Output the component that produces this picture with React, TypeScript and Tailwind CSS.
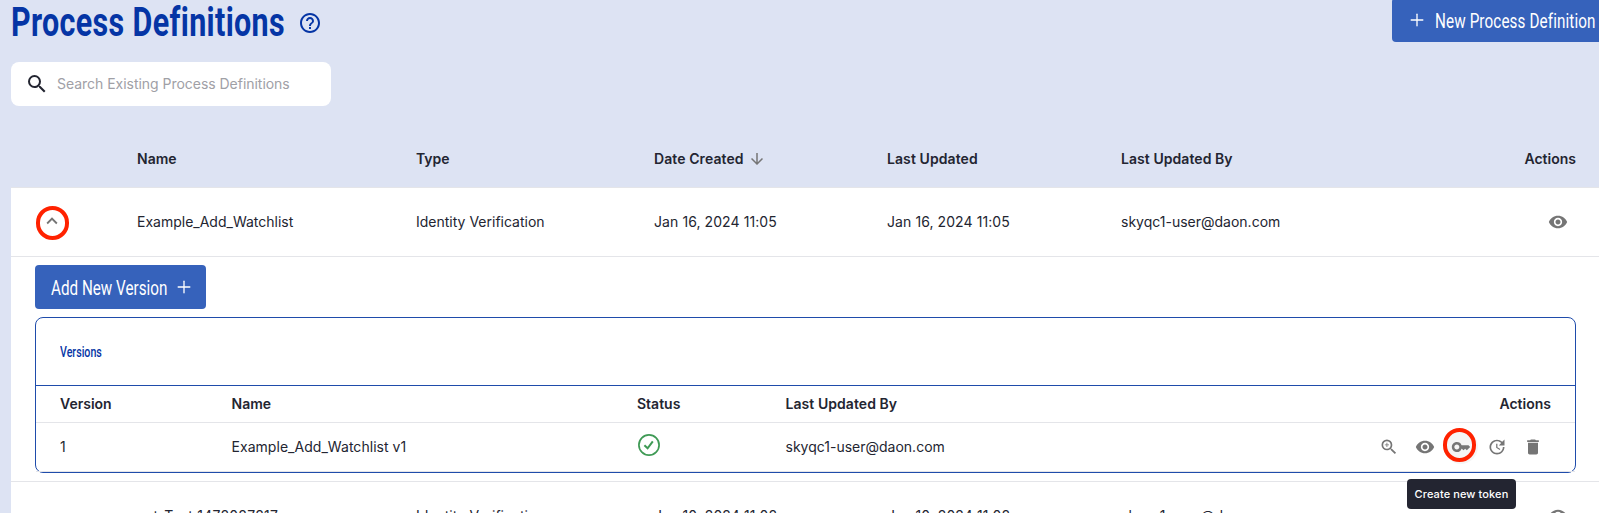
import type { ReactNode } from 'react'
import { Plus } from 'lucide-react'
import {
  MdArrowDownward,
  MdDelete,
  MdHelpOutline,
  MdKey,
  MdKeyboardArrowDown,
  MdKeyboardArrowUp,
  MdSearch,
  MdUpdate,
  MdVisibility,
  MdZoomIn,
} from 'react-icons/md'

type Definition = {
  name: string
  type: string
  created: string
  updated: string
  updatedBy: string
  open?: boolean
}

const DEFINITIONS: Definition[] = [
  {
    name: 'Example_Add_Watchlist',
    type: 'Identity Verification',
    created: 'Jan 16, 2024 11:05',
    updated: 'Jan 16, 2024 11:05',
    updatedBy: 'skyqc1-user@daon.com',
    open: true,
  },
  {
    name: 'aut_Test 1478087817',
    type: 'Identity Verification',
    created: 'Jan 10, 2024 11:08',
    updated: 'Jan 10, 2024 11:08',
    updatedBy: 'skyqc1-user@daon.com',
  },
]

const COLS = 'grid grid-cols-[126px_279px_238px_233px_234px_1fr] items-center [&_span]:pb-0.5'
const VERSION_COLS =
  'grid grid-cols-[171.5px_405.5px_148.5px_1fr_auto] items-center px-6 [&>span]:pb-0.5'

// Condensed display type, squeezed horizontally inside a fixed-width slot
function Condensed({ className, children }: { className: string; children: ReactNode }) {
  return (
    <span className={`block shrink-0 whitespace-nowrap text-left font-['Roboto'] ${className}`}>
      <span className="inline-block origin-left scale-x-[0.762]">{children}</span>
    </span>
  )
}

function StatusOk() {
  return (
    <svg width="24" height="24" viewBox="0 0 24 24" fill="none" stroke="#3f9a55" strokeWidth="1.7">
      <circle cx="12" cy="12" r="10.1" />
      <path d="M7.4 12.2l3.2 3.1 5.2-7" strokeWidth="2" />
    </svg>
  )
}

function DefinitionRow({ item }: { item: Definition }) {
  return (
    <div className={`${COLS} h-[69px] border-t border-[#e4e5e9]`}>
      <div className="flex pl-[25px] pt-px">
        <div
          className={`flex h-[34px] w-[33px] items-center justify-center rounded-full text-[#757575] ${
            item.open ? 'border-4 border-[#ff2200]' : ''
          }`}
        >
          {item.open ? (
            <MdKeyboardArrowUp size={22} className="-mt-1 -ml-px shrink-0" />
          ) : (
            <MdKeyboardArrowDown size={22} className="shrink-0" />
          )}
        </div>
      </div>
      <span className={item.open ? '' : 'tracking-[0.22px]'}>{item.name}</span>
      <span>{item.type}</span>
      <span className="tracking-[0.08px]">{item.created}</span>
      <span className="tracking-[0.08px]">{item.updated}</span>
      <div className="flex items-center justify-between pr-[31px]">
        <span>{item.updatedBy}</span>
        <MdVisibility size={20} className="text-[#757575]" />
      </div>
    </div>
  )
}

function VersionsPanel() {
  return (
    <div className="h-[225px] border-t border-[#e4e5e9] pt-2 pl-6 pr-[23px]">
      <button className="flex h-11 w-[171px] items-center rounded bg-[#3662bb] pl-4 text-white">
        <Condensed className="w-[123px] pt-0.5 text-[20px]">Add New Version</Condensed>
        <Plus size={20} strokeWidth={1.6} className="shrink-0" />
      </button>

      <div className="mt-2 h-[156px] rounded-lg border border-[#1f4cab]">
        <div className="flex h-[68px] items-center border-b border-[#1f4cab] px-6 pt-0.5 text-[#0535a5]">
          <Condensed className="w-[42px] text-[14px] font-medium">Versions</Condensed>
        </div>
        <div className={`${VERSION_COLS} h-[37px] border-b border-[#e4e5e9] font-semibold`}>
          <span>Version</span>
          <span>Name</span>
          <span>Status</span>
          <span className="tracking-[0.06px]">Last Updated By</span>
          <span>Actions</span>
        </div>
        <div className={`${VERSION_COLS} h-[49px] border-b border-[#e4e5e9]`}>
          <span>1</span>
          <span className="tracking-[0.04px]">Example_Add_Watchlist v1</span>
          <div className="pb-1">
            <StatusOk />
          </div>
          <span>skyqc1-user@daon.com</span>
          <div className="flex items-center gap-4 pr-2 text-[#757575]">
            <MdZoomIn size={20} />
            <MdVisibility size={20} />
            <div className="relative">
              <div className="absolute -left-[7px] -top-[7px] size-[34px] rounded-full bg-black/[0.04]" />
              <MdKey size={20} className="relative" />
              <div className="absolute -left-[8px] -top-[9px] h-[34px] w-[33px] rounded-full border-4 border-[#ff2200]" />
              <div className="absolute left-[-44px] top-[42px] z-10 flex h-[30px] w-[109px] items-center justify-center whitespace-nowrap rounded bg-[#232531] text-[11px] font-medium tracking-[0.1px] text-white">
                Create new token
              </div>
            </div>
            <MdUpdate size={20} />
            <MdDelete size={20} />
          </div>
        </div>
      </div>
    </div>
  )
}

export default function App() {
  return (
    <div className="h-[513px] w-[1599px] overflow-hidden bg-[#dde3f3] pl-[11px] font-['Inter',sans-serif] text-[14px] text-[#232531]">
      <header className="flex h-[62px] items-start justify-between">
        <div className="flex items-center">
          <Condensed className="w-[287px] text-[40px] font-bold leading-[46px] tracking-[0.45px] text-[#0535a5]">
            Process Definitions
          </Condensed>
          <MdHelpOutline size={24} className="text-[#0535a5]" />
        </div>
        <button className="-mt-0.5 flex h-11 w-[207px] items-center rounded-l bg-[#3662bb] pl-[15px] text-white">
          <Plus size={20} strokeWidth={1.6} className="shrink-0" />
          <Condensed className="ml-2 w-[163px] pt-0.5 text-[20px] tracking-[0.15px]">
            New Process Definition
          </Condensed>
        </button>
      </header>

      <div className="flex h-11 w-80 items-center rounded-lg bg-white pl-3.5">
        <MdSearch size={24} />
        <span className="ml-2 pb-0.5 tracking-[-0.03px] text-[#a0a0a6]">
          Search Existing Process Definitions
        </span>
      </div>

      <div className={`${COLS} mt-[25px] h-14 font-semibold`}>
        <span />
        <span>Name</span>
        <span>Type</span>
        <div className="flex items-center gap-1">
          <span className="tracking-[0.08px]">Date Created</span>
          <MdArrowDownward size={18} className="text-[#757575]" />
        </div>
        <span className="tracking-[0.08px]">Last Updated</span>
        <div className="flex justify-between pr-[23px]">
          <span className="tracking-[0.06px]">Last Updated By</span>
          <span>Actions</span>
        </div>
      </div>

      <div className="bg-white">
        <DefinitionRow item={DEFINITIONS[0]} />
        <VersionsPanel />
        <DefinitionRow item={DEFINITIONS[1]} />
      </div>
    </div>
  )
}
